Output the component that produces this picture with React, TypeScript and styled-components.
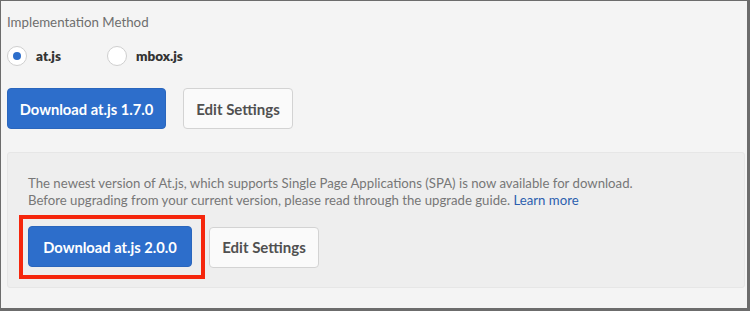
import styled, { createGlobalStyle } from "styled-components";

const GlobalStyle = createGlobalStyle`
  body {
    margin: 0;
    font-family: Lato, "Open Sans", sans-serif;
  }
`;

function Radio({ label, checked }: { label: string; checked?: boolean }) {
  return (
    <RadioLabel>
      <Circle checked={checked} />
      {label}
    </RadioLabel>
  );
}

function App() {
  return (
    <>
      <GlobalStyle />
      <Frame>
        <Label>Implementation Method</Label>
        <RadioRow>
          <Radio label="at.js" checked />
          <Radio label="mbox.js" />
        </RadioRow>
        <ButtonRow>
          <PrimaryButton width={159}>Download at.js 1.7.0</PrimaryButton>
          <SecondaryButton>Edit Settings</SecondaryButton>
        </ButtonRow>
        <Panel>
          <Notice>
            The newest version of At.js, which supports Single Page Applications (SPA) is now
            available for download.
            <br />
            Before upgrading from your current version, please read through the upgrade guide.{" "}
            <LearnMore href="#">Learn more</LearnMore>
          </Notice>
          <PanelButtons>
            <Highlight>
              <PrimaryButton width={164}>Download at.js 2.0.0</PrimaryButton>
            </Highlight>
            <SecondaryButton>Edit Settings</SecondaryButton>
          </PanelButtons>
        </Panel>
      </Frame>
    </>
  );
}

const Frame = styled.div`
  box-sizing: border-box;
  width: 750px;
  height: 311px;
  background: #f4f4f4;
  border: 1px solid #6c6c6c;
  border-right-width: 3px;
  border-bottom-width: 3px;
  padding: 12px 3px 0 6px;
  display: flex;
  flex-direction: column;
`;
const Label = styled.div`
  font-size: 13.3px;
  color: #6e6e6e;
  line-height: 18px;
`;
const RadioRow = styled.div`
  display: flex;
  gap: 46px;
  margin-top: 15px;
  height: 20px;
  align-items: center;
`;
const RadioLabel = styled.label`
  display: flex;
  align-items: center;
  gap: 9px;
  font-size: 13.5px;
  font-weight: 800;
  color: #333;
`;
const Circle = styled.span<{ checked?: boolean }>`
  box-sizing: border-box;
  width: 20px;
  height: 20px;
  border-radius: 50%;
  border: 1px solid #cfcfcf;
  background: #fff;
  display: flex;
  align-items: center;
  justify-content: center;
  &::after {
    content: "";
    width: 8px;
    height: 8px;
    border-radius: 50%;
    background: ${(p) => (p.checked ? "#2d6ecb" : "transparent")};
  }
`;
const ButtonRow = styled.div`
  display: flex;
  gap: 17px;
  margin-top: 22px;
`;
const BaseButton = styled.button`
  box-sizing: border-box;
  height: 41px;
  border-radius: 4px;
  font-family: Lato, "Open Sans", sans-serif;
  font-size: 14.7px;
  font-weight: bold;
  padding: 0;
  cursor: pointer;
`;
const PrimaryButton = styled(BaseButton)<{ width: number }>`
  width: ${(p) => p.width}px;
  background: #2d6ecb;
  border: 1px solid #2a66bd;
  color: #fff;
`;
const SecondaryButton = styled(BaseButton)`
  width: 110px;
  background: #fafafa;
  border: 1px solid #d3d3d3;
  color: #505050;
  font-size: 15px;
`;
const Panel = styled.div`
  box-sizing: border-box;
  margin-top: 23px;
  width: 738px;
  height: 136px;
  background: #eeeeee;
  border: 1px solid #e6e6e6;
  border-radius: 3px;
  padding: 22px 20px 0;
`;
const Notice = styled.p`
  margin: 0;
  font-size: 13.2px;
  line-height: 17px;
  color: #777;
`;
const LearnMore = styled.a`
  color: #2c5fae;
  text-decoration: none;
`;
const PanelButtons = styled.div`
  display: flex;
  align-items: center;
  gap: 4px;
  margin-top: 6px;
`;
const Highlight = styled.div`
  border: 4px solid #f5260c;
  padding: 7px 9px 8px 5px;
  margin-left: -9px;
  display: flex;
`;

export default App;
